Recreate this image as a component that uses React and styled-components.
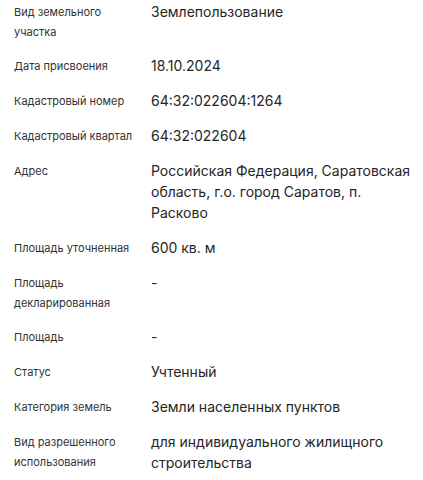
import React from "react";
import styled, { createGlobalStyle } from "styled-components";

const Global = createGlobalStyle`
  html, body { margin: 0; padding: 0; background: #fff; }
  body { font-family: Inter, "Noto Sans", Arial, sans-serif; }
`;

const List = styled.dl`
  margin: 0;
  padding: 2px 0 0 14px;
  display: grid;
  grid-template-columns: 137px 1fr;
  row-gap: 14px;
`;

const Label = styled.dt`
  margin: 0;
  font-size: 11px;
  line-height: 20px;
  color: #333;
  padding-right: 6px;
`;

const Value = styled.dd`
  margin: 0;
  padding-right: 9px;
  font-size: 14px;
  line-height: 21px;
  color: #262626;
  position: relative;
  top: -1px;
`;

const rows = [
  ["Вид земельного участка", "Землепользование"],
  ["Дата присвоения", "18.10.2024"],
  ["Кадастровый номер", "64:32:022604:1264"],
  ["Кадастровый квартал", "64:32:022604"],
  ["Адрес", "Российская Федерация, Саратовская область, г.о. город Саратов, п. Расково"],
  ["Площадь уточненная", "600 кв. м"],
  ["Площадь декларированная", "-"],
  ["Площадь", "-"],
  ["Статус", "Учтенный"],
  ["Категория земель", "Земли населенных пунктов"],
  ["Вид разрешенного использования", "для индивидуального жилищного строительства"],
];

export default function App() {
  return (
    <>
      <Global />
      <List>
        {rows.map(([l, v]) => (
          <React.Fragment key={l}>
            <Label>{l}</Label>
            <Value>{v}</Value>
          </React.Fragment>
        ))}
      </List>
    </>
  );
}
